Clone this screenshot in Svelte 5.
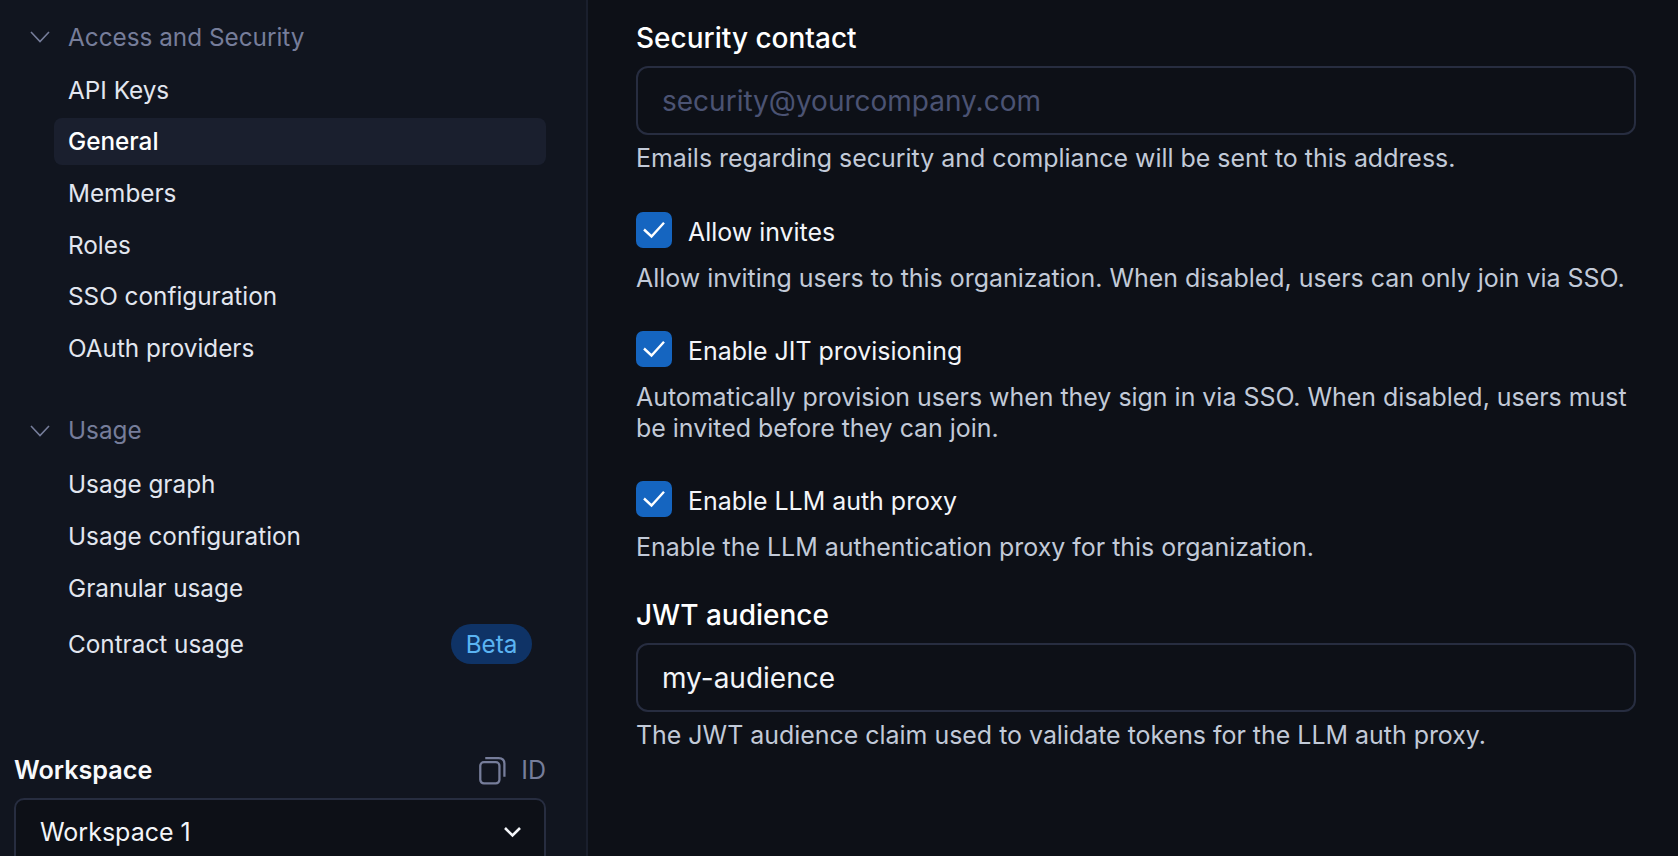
<script lang="ts">
	const groups = [
		{
			title: 'Access and Security',
			items: ['API Keys', 'General', 'Members', 'Roles', 'SSO configuration', 'OAuth providers']
		},
		{
			title: 'Usage',
			items: ['Usage graph', 'Usage configuration', 'Granular usage', 'Contract usage']
		}
	];
	const active = 'General';
	const toggles = [
		{ label: 'Allow invites', help: 'Allow inviting users to this organization. When disabled, users can only join via SSO.' },
		{ label: 'Enable JIT provisioning', help: 'Automatically provision users when they sign in via SSO. When disabled, users must be invited before they can join.' },
		{ label: 'Enable LLM auth proxy', help: 'Enable the LLM authentication proxy for this organization.' }
	];
</script>

<div class="page">
	<aside class="sidebar">
		<nav class="nav">
			{#each groups as group}
				<section class="group">
					<div class="group-title">
						<svg class="chev" viewBox="0 0 20 12" fill="none"><path d="M1 1 L10 10.5 L19 1" /></svg>
						<span>{group.title}</span>
					</div>
					{#each group.items as item}
						<a class="item" class:active={item === active} class:has-badge={item === 'Contract usage'}>
							<span>{item}</span>
							{#if item === 'Contract usage'}<span class="badge">Beta</span>{/if}
						</a>
					{/each}
				</section>
			{/each}
		</nav>
		<div class="workspace">
			<div class="ws-head">
				<span class="ws-label">Workspace</span>
				<span class="ws-id">
					<svg viewBox="0 0 26 28" fill="none">
						<rect x="1.2" y="6" width="18.5" height="20.5" rx="3.5" />
						<path d="M6 2 H19 Q24.5 2 24.5 7.5 V20" />
					</svg>
					ID
				</span>
			</div>
			<div class="select">
				<span>Workspace 1</span>
				<svg viewBox="0 0 19 12" fill="none"><path d="M2 2 L9.5 9.5 L17 2" /></svg>
			</div>
		</div>
	</aside>

	<main class="main">
		<label class="field-label" for="contact">Security contact</label>
		<input id="contact" class="input" placeholder="security@yourcompany.com" />
		<p class="help">Emails regarding security and compliance will be sent to this address.</p>

		{#each toggles as t}
			<div class="toggle">
				<div class="check-row">
					<span class="box">
						<svg viewBox="0 0 36 36" fill="none"><path d="M8 17.5 L15.5 24.5 L28 10.7" /></svg>
					</span>
					<span class="check-label">{t.label}</span>
				</div>
				<p class="help">{t.help}</p>
			</div>
		{/each}

		<label class="field-label jwt" for="aud">JWT audience</label>
		<input id="aud" class="input" value="my-audience" />
		<p class="help">The JWT audience claim used to validate tokens for the LLM auth proxy.</p>
	</main>
</div>

<style>
	:global(body) {
		margin: 0;
		background: #0d1017;
	}

	.page {
		display: flex;
		height: 856px;
		overflow: hidden;
		font-family: Inter, "Noto Sans", sans-serif;
		color: #f3f5f9;
	}

	.sidebar {
		width: 588px;
		flex-shrink: 0;
		box-sizing: border-box;
		background: #11151f;
		border-right: 2px solid #1a1f2d;
		padding: 0 40px 0 14px;
		display: flex;
		flex-direction: column;
	}

	.nav {
		padding-left: 40px;
		height: 752px;
		flex-shrink: 0;
		box-sizing: border-box;
		padding-top: 13px;
	}

	.group {
		margin-bottom: 35px;
	}

	.group-title {
		position: relative;
		height: 47px;
		display: flex;
		align-items: center;
		padding-left: 14px;
		margin-bottom: 6.2px;
		font-size: 24.3px;
		color: #767d9a;
	}

	.group + .group .group-title {
		margin-bottom: 7px;
	}

	.chev {
		position: absolute;
		left: -24px;
		top: 18px;
		width: 20px;
		height: 12px;
		stroke: #767d9a;
		stroke-width: 1.6;
	}

	.item {
		display: flex;
		align-items: center;
		justify-content: space-between;
		min-height: 47px;
		box-sizing: border-box;
		padding: 0 14px;
		margin-bottom: 4.7px;
		font-size: 24.3px;
		border-radius: 8px;
		color: #e2e6ef;
	}

	.item.has-badge {
		padding-block: 8px;
	}

	.item.active {
		background: #1a1f2e;
		color: #fff;
		font-weight: 500;
	}

	.badge {
		background: #0f3366;
		color: #5bb4f2;
		border-radius: 20px;
		padding: 0 14.5px;
		height: 40px;
		line-height: 40px;
	}

	.ws-head {
		display: flex;
		justify-content: space-between;
		align-items: center;
		height: 36px;
		margin-bottom: 10px;
	}

	.ws-label {
		font-size: 25.2px;
		font-weight: 600;
		color: #f8f9fc;
	}

	.ws-id {
		display: flex;
		align-items: center;
		gap: 15px;
		font-size: 25px;
		color: #767d9a;
	}

	.ws-id svg {
		width: 27px;
		height: 29px;
		stroke: #767d9a;
		stroke-width: 2.2;
	}

	.select {
		display: flex;
		align-items: center;
		justify-content: space-between;
		height: 68px;
		box-sizing: border-box;
		border: 2px solid #272d40;
		border-radius: 10px;
		background: #0d1017;
		padding: 0 22px 0 24px;
		font-size: 25px;
		color: #f3f5f9;
	}

	.select svg {
		width: 19px;
		height: 12px;
		stroke: #f3f5f9;
		stroke-width: 2.6;
	}

	.main {
		flex: 1;
		min-width: 0;
		padding: 18px 42px 0 48px;
	}

	.field-label {
		display: block;
		font-size: 28px;
		line-height: 40px;
		font-weight: 500;
		color: #fff;
		margin-bottom: 8px;
	}

	.input {
		display: block;
		width: 100%;
		height: 69px;
		box-sizing: border-box;
		background: #0d1017;
		border: 2px solid #272d40;
		border-radius: 12px;
		padding: 0 24px;
		font: inherit;
		font-size: 28px;
		color: #f3f5f9;
		outline: none;
	}

	.input::placeholder {
		color: #4b5373;
	}

	.help {
		margin: 8px 0 0;
		font-size: 24.93px;
		line-height: 31px;
		color: #c2cad8;
	}

	.toggle {
		margin-top: 38px;
	}

	.toggle + .toggle {
		margin-top: 37px;
	}

	.toggle .help {
		margin-top: 15px;
	}

	.check-row {
		display: flex;
		align-items: center;
		gap: 16px;
		height: 36px;
	}

	.box {
		width: 36px;
		height: 36px;
		background: #1565c0;
		border-radius: 7px;
		flex-shrink: 0;
	}

	.box svg {
		display: block;
		stroke: #fff;
		stroke-width: 2.4;
	}

	.check-label {
		font-size: 24.93px;
		color: #f3f5f9;
		padding-top: 3px;
	}

	.jwt {
		margin-top: 32px;
	}
</style>
